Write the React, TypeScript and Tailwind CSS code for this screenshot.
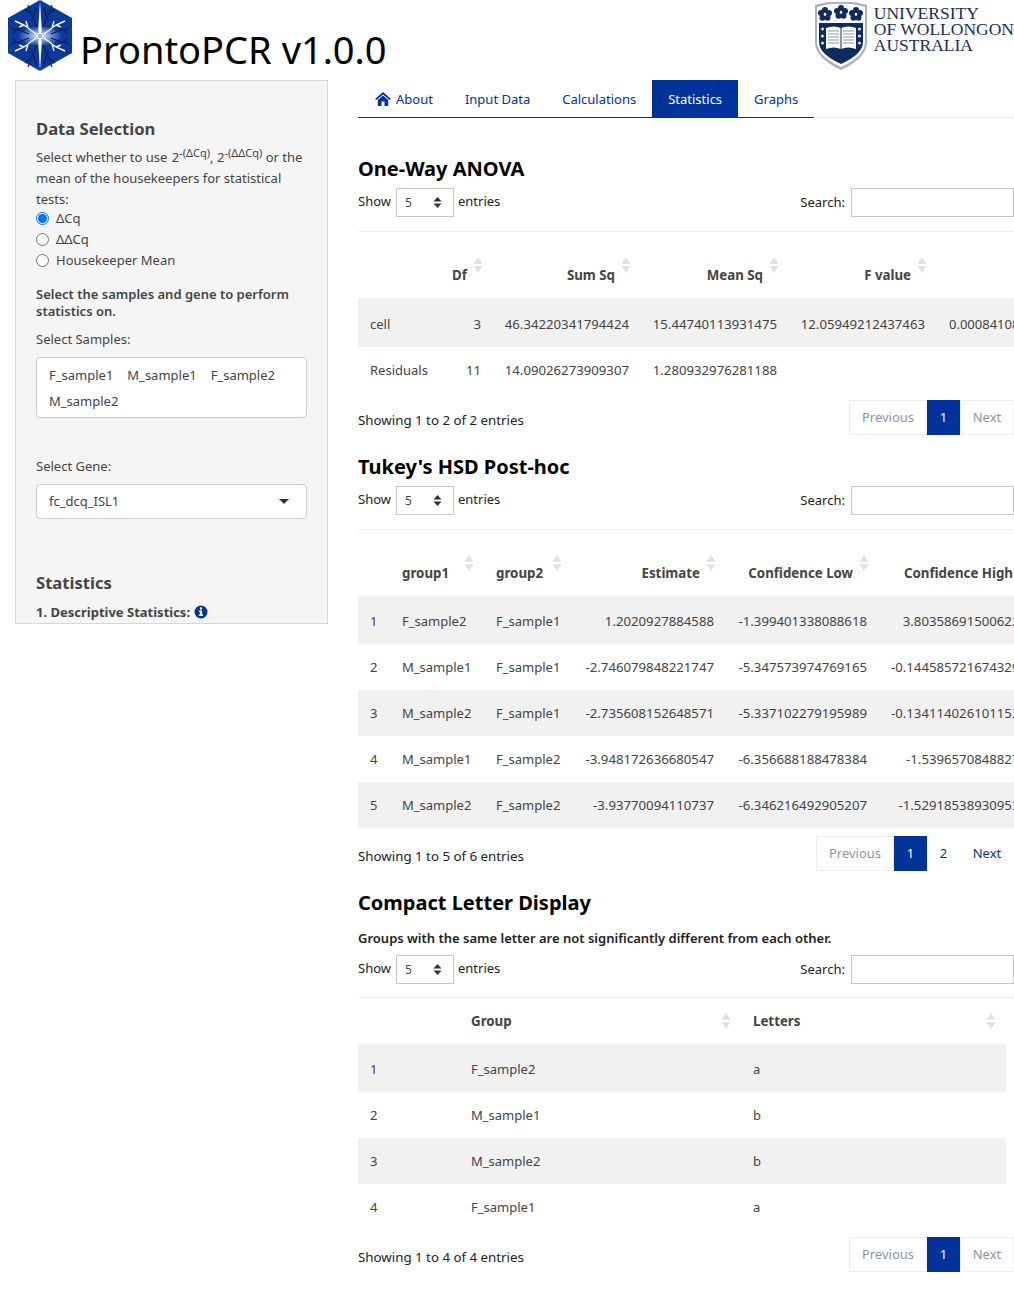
const Sort = () => (
  <svg width="10" height="16" viewBox="0 0 10 16" className="block">
    <path d="M5 0 L9.5 7 H0.5 Z" fill="#e2e2e2" />
    <path d="M5 16 L9.5 9 H0.5 Z" fill="#e2e2e2" />
  </svg>
);

const Logo = () => (
  <svg width="66" height="72" viewBox="0 0 66 72">
    <defs>
      <radialGradient id="glow" cx="50%" cy="50%" r="50%">
        <stop offset="0%" stopColor="#ffffff" />
        <stop offset="40%" stopColor="#8fa6de" />
        <stop offset="100%" stopColor="#0b3a9c" />
      </radialGradient>
    </defs>
    <path d="M33 0 L65 18 V53 L33 71 L1 53 V18 Z" fill="#0b3a9c" />
    <ellipse cx="33" cy="36" rx="22" ry="10" fill="url(#glow)" />
    <g stroke="#0a1f5c" strokeWidth="1.2" fill="none">
      <path d="M21 5 L24 14 L30 27 M24 14 L18 9 M26 18 L29 8 M45 5 L42 14 L36 27 M42 14 L48 9 M40 18 L37 8" />
      <path d="M4 28 L12 30 L22 34 M9 29 L6 33 M15 31 L11 25 M62 28 L54 30 L44 34 M57 29 L60 33 M51 31 L55 25" />
      <path d="M21 67 L24 58 L30 45 M24 58 L18 63 M26 54 L29 64 M45 67 L42 58 L36 45 M42 58 L48 63 M40 54 L37 64" />
      <path d="M4 44 L12 42 L22 38 M9 43 L6 39 M15 41 L11 47 M62 44 L54 42 L44 38 M57 43 L60 39 M51 41 L55 47" />
    </g>
    <g fill="#ffffff">
      <path d="M33 1 L34.8 30 L33 36 L31.2 30 Z" />
      <path d="M33 71 L34.8 42 L33 36 L31.2 42 Z" />
    </g>
    <g stroke="#ffffff" fill="none" strokeWidth="1.4">
      <path d="M8 21 L17 25 L29 34 M17 25 L12 27 M21 28 L19 21 M58 21 L49 25 L37 34 M49 25 L54 27 M45 28 L47 21" />
      <path d="M8 51 L17 47 L29 38 M17 47 L12 45 M21 44 L19 51 M58 51 L49 47 L37 38 M49 47 L54 45 M45 44 L47 51" />
    </g>
    <circle cx="33" cy="36" r="3" fill="#a9b9e6" stroke="#ffffff" />
  </svg>
);

const Flower = ({ x, y }: { x: number; y: number }) => (
  <g fill="#0f2a5c" transform={`translate(${x} ${y}) scale(1.25)`}>
    <circle cx="0" cy="-3.2" r="2.4" />
    <circle cx="3.2" cy="-0.8" r="2.4" />
    <circle cx="2" cy="3" r="2.4" />
    <circle cx="-2" cy="3" r="2.4" />
    <circle cx="-3.2" cy="-0.8" r="2.4" />
    <circle cx="0" cy="0.4" r="0.9" fill="#ffffff" />
  </g>
);

const Crest = () => (
  <svg width="54" height="70" viewBox="0 0 54 70">
    <path d="M1 5 Q14 1 27 2 Q40 1 53 5 V42 Q53 58 27 70 Q1 58 1 42 Z" fill="#aab2c1" />
    <path d="M3 7 Q15 3 27 4 Q39 3 51 7 V42 Q51 56 27 67 Q3 56 3 42 Z" fill="#ffffff" />
    <path d="M5 23 H49 V42 Q49 54 27 64 Q5 54 5 42 Z" fill="#0f2a5c" />
    <Flower x={11} y={14} />
    <Flower x={27} y={12} />
    <Flower x={42} y={14} />
    <path d="M12 28 Q20 25 27 28 Q34 25 42 28 V49 Q34 46 27 49 Q20 46 12 49 Z" fill="#ffffff" />
    <path d="M27 28 V49" stroke="#0f2a5c" />
    <g stroke="#8a96ad" strokeWidth="1">
      <path d="M14 31 H25 M14 34 H25 M14 37 H25 M14 40 H25 M14 43 H25 M29 31 H40 M29 34 H40 M29 37 H40 M29 40 H40 M29 43 H40" />
    </g>
    <g fill="#d5dae4">
      <circle cx="8.5" cy="29" r="1.6" />
      <circle cx="8.5" cy="36" r="1.6" />
      <circle cx="8.5" cy="43" r="1.6" />
      <circle cx="45.5" cy="29" r="1.6" />
      <circle cx="45.5" cy="36" r="1.6" />
      <circle cx="45.5" cy="43" r="1.6" />
    </g>
  </svg>
);

const Radio = ({ on, label }: { on?: boolean; label: string }) => (
  <div className="flex items-center h-[21px]">
    <span
      className={
        on
          ? "w-[13px] h-[13px] rounded-full border border-[#0075ff] bg-white flex items-center justify-center"
          : "w-[13px] h-[13px] rounded-full border border-[#767676] bg-white"
      }
    >
      {on && <span className="w-[9px] h-[9px] rounded-full bg-[#0075ff]" />}
    </span>
    <span className="ml-[7px]">{label}</span>
  </div>
);

const Sidebar = () => (
  <aside className="ml-[15px] w-[313px] h-[544px] shrink-0 overflow-hidden bg-[#f5f5f5] border border-[#d8d8d8] pt-[36px] px-[20px] text-[13px] text-[#444]">
    <h3 className="text-[16.6px] font-bold leading-[24px] text-[#444]">Data Selection</h3>
    <p className="mt-[6px] leading-[21px]">
      Select whether to use <span className="ml-[1px]">2</span>
      <sup className="text-[11px]">-(ΔCq)</sup>, 2<sup className="text-[11px]">-(ΔΔCq)</sup> or the mean of the
      housekeepers for statistical tests:
    </p>
    <div className="-mt-[2px]">
      <Radio on label="ΔCq" />
      <Radio label="ΔΔCq" />
      <Radio label="Housekeeper Mean" />
    </div>
    <p className="mt-[15px] font-semibold leading-[17px]">Select the samples and gene to perform statistics on.</p>
    <p className="mt-[9px] leading-[21px]">Select Samples:</p>
    <div className="mt-[7px] h-[61px] bg-white border border-[#cccccc] rounded-[4px] px-[12px] pt-[4px] leading-[26px]">
      <div className="flex gap-[14px]">
        <span>F_sample1</span>
        <span>M_sample1</span>
        <span>F_sample2</span>
      </div>
      <div>M_sample2</div>
    </div>
    <p className="mt-[38px] leading-[21px]">Select Gene:</p>
    <div className="mt-[7px] h-[35px] bg-white border border-[#cccccc] rounded-[4px] px-[12px] flex items-center justify-between">
      <span className="pt-[1px]">fc_dcq_ISL1</span>
      <span className="w-0 h-0 border-x-[5px] border-x-transparent border-t-[5px] border-t-[#333] mr-[5px]" />
    </div>
    <h3 className="mt-[52px] text-[16.6px] font-bold leading-[24px]">Statistics</h3>
    <p className="mt-[7px] font-bold flex items-center gap-[4px] leading-[20px]">
      1. Descriptive Statistics:
      <svg width="14" height="14" viewBox="0 0 14 14">
        <circle cx="7" cy="7" r="6.5" fill="#00339a" />
        <rect x="5.9" y="2.4" width="2.2" height="2.2" fill="#fff" />
        <path d="M4.9 5.6 H8.1 V9.6 H9.1 V11 H4.9 V9.6 H5.9 V7 H4.9 Z" fill="#fff" />
      </svg>
    </p>
  </aside>
);

const Tabs = () => (
  <nav className="flex h-[38px] border-b border-[#eeeeee] text-[13px] text-[#00339a] whitespace-nowrap">
    <div className="flex border-b border-[#00339a] h-[38px] w-[456px]">
      <a className="h-[37px] pl-[17px] pr-[16px] pt-[2px] flex items-center gap-[5px]">
        <svg width="16" height="14" viewBox="0 0 16 14" className="-mt-[2px]">
          <path d="M8 0 L16 7 L14.6 8 L8 2.4 L1.4 8 L0 7 Z M2.8 8 L8 3.6 L13.2 8 V14 H9.5 V9.6 H6.5 V14 H2.8 Z" fill="#00339a" />
        </svg>
        About
      </a>
      <a className="h-[37px] px-[16px] pt-[2px] flex items-center">Input Data</a>
      <a className="h-[37px] px-[16px] pt-[2px] flex items-center">Calculations</a>
      <a className="h-[37px] px-[16px] pt-[2px] flex items-center bg-[#00339a] text-white">Statistics</a>
      <a className="h-[37px] px-[16px] pt-[2px] flex items-center">Graphs</a>
    </div>
  </nav>
);

const Controls = () => (
  <div className="flex items-center justify-between h-[29px] text-[13px] text-[#222]">
    <div className="flex items-center">
      <span className="-mt-[2px]">Show</span>
      <span className="ml-[5px] w-[58px] h-[29px] border border-[#c8c8c8] pl-[8px] flex items-center justify-between pr-[11px] text-[12px] text-[#444]">
        5
        <svg width="9" height="11" viewBox="0 0 9 11">
          <path d="M4.5 0 L8.5 4.4 H0.5 Z M4.5 11 L8.5 6.6 H0.5 Z" fill="#333" />
        </svg>
      </span>
      <span className="ml-[4px] -mt-[2px]">entries</span>
    </div>
    <div className="flex items-center">
      <span>Search:</span>
      <span className="ml-[6px] w-[163px] h-[29px] border border-[#c8c8c8] bg-white" />
    </div>
  </div>
);

const Pager = ({ info, two }: { info: string; two?: boolean }) => (
  <div className="flex items-center justify-between h-[35px] text-[13px] text-[#222]">
    <span className="pt-[6px] text-[13.3px]">{info}</span>
    <div className="flex h-[35px]">
      <span className="h-[35px] w-[78px] pt-[1px] border border-[#eeeeee] flex items-center justify-center text-[#8c96a3]">Previous</span>
      <span className="h-[35px] w-[33px] pt-[1px] bg-[#00339a] text-white flex items-center justify-center">1</span>
      {two && <span className="h-[35px] w-[33px] pt-[1px] text-[#00339a] flex items-center justify-center">2</span>}
      <span
        className={
          two
            ? "h-[35px] w-[54px] pt-[1px] text-[#00339a] flex items-center justify-center"
            : "h-[35px] w-[54px] pt-[1px] border border-[#eeeeee] flex items-center justify-center text-[#8c96a3]"
        }
      >
        Next
      </span>
    </div>
  </div>
);

type Col = { title: string; width: number; align: "left" | "right" };

type TableProps = {
  cols: Col[];
  rows: string[][];
  headH: number;
  rowH: number[];
  sortTop: number;
  center?: boolean;
  width?: number;
};

const DataTable = ({ cols, rows, headH, rowH, sortTop, center, width }: TableProps) => (
  <div className="overflow-hidden" style={{ width: width ?? 656 }}>
    <div className="grid" style={{ gridTemplateColumns: cols.map((c) => `${c.width}px`).join(" "), width: "max-content" }}>
      {cols.map((c, i) => (
        <div
          key={i}
          className={
            (center ? "items-center pt-[2px] " : "items-end pb-[12px] ") +
            (c.align === "right"
              ? "relative flex justify-end font-bold text-[13.3px] text-[#444] pr-[26px] whitespace-nowrap"
              : "relative flex font-bold text-[13.3px] text-[#444] pl-[12px] whitespace-nowrap")
          }
          style={{ height: headH }}
        >
          {c.title}
          {c.title !== "" && (
            <span className="absolute right-[10px]" style={{ top: sortTop }}>
              <Sort />
            </span>
          )}
        </div>
      ))}
      {rows.map((r, ri) =>
        r.map((v, ci) => (
          <div
            key={`${ri}-${ci}`}
            className={
              (ri % 2 === 0 ? "bg-[#f1f1f1] " : "") +
              (ri === 0 ? "pt-[4px] " : "pt-[2px] ") +
              (cols[ci].align === "right"
                ? "flex items-center justify-end px-[12px] whitespace-nowrap text-[13.2px] text-[#444]"
                : "flex items-center px-[12px] whitespace-nowrap text-[13px] text-[#444]")
            }
            style={{ height: rowH[ri] }}
          >
            {v}
          </div>
        )),
      )}
    </div>
  </div>
);

const anova: Col[] = [
  { title: "", width: 86, align: "left" },
  { title: "Df", width: 49, align: "right" },
  { title: "Sum Sq", width: 148, align: "right" },
  { title: "Mean Sq", width: 148, align: "right" },
  { title: "F value", width: 148, align: "right" },
  { title: "", width: 120, align: "left" },
];

const tukey: Col[] = [
  { title: "", width: 32, align: "left" },
  { title: "group1", width: 94, align: "left" },
  { title: "group2", width: 88, align: "left" },
  { title: "Estimate", width: 154, align: "right" },
  { title: "Confidence Low", width: 153, align: "right" },
  { title: "Confidence High", width: 160, align: "right" },
];

const cld: Col[] = [
  { title: "", width: 101, align: "left" },
  { title: "Group", width: 282, align: "left" },
  { title: "Letters", width: 265, align: "left" },
];

const H2 = ({ children, className }: { children: string; className: string }) => (
  <h2 className={`${className} text-[20px] font-bold leading-[30px] text-black`}>{children}</h2>
);

export default function App() {
  return (
    <div className="w-[1014px] h-[1316px] overflow-hidden bg-white font-['Noto_Sans','Open_Sans',sans-serif]">
      <header className="h-[80px] flex items-start justify-between">
        <div className="flex items-start">
          <div className="ml-[7px]">
            <Logo />
          </div>
          <h1 className="ml-[7px] mt-[24px] text-[38px] leading-[50px] text-black">ProntoPCR v1.0.0</h1>
        </div>
        <div className="flex items-start">
          <Crest />
          <div className="ml-[6px] mt-[5px] font-['Liberation_Serif',serif] text-[17.5px] leading-[16px] text-[#1b2d5b] whitespace-nowrap">
            <div>UNIVERSITY</div>
            <div>OF WOLLONGON</div>
            <div>AUSTRALIA</div>
          </div>
        </div>
      </header>
      <div className="flex">
        <Sidebar />
        <main className="ml-[30px] w-[656px]">
          <Tabs />
          <H2 className="mt-[36px]">One-Way ANOVA</H2>
          <div className="mt-[4px]">
            <Controls />
          </div>
          <div className="mt-[14px] border-t border-[#eeeeee]">
            <DataTable
              cols={anova}
              headH={66}
              sortTop={25}
              rowH={[49, 46]}
              rows={[
                ["cell", "3", "46.34220341794424", "15.44740113931475", "12.05949212437463", "0.00084108"],
                ["Residuals", "11", "14.09026273909307", "1.280932976281188", "", ""],
              ]}
            />
          </div>
          <div className="mt-[7px]">
            <Pager info="Showing 1 to 2 of 2 entries" />
          </div>
          <H2 className="mt-[17px]">Tukey's HSD Post-hoc</H2>
          <div className="mt-[4px]">
            <Controls />
          </div>
          <div className="mt-[14px] border-t border-[#eeeeee]">
            <DataTable
              cols={tukey}
              headH={66}
              sortTop={25}
              rowH={[48, 46, 46, 46, 46]}
              rows={[
                ["1", "F_sample2", "F_sample1", "1.2020927884588", "-1.399401338088618", "3.803586915006229"],
                ["2", "M_sample1", "F_sample1", "-2.746079848221747", "-5.347573974769165", "-0.1445857216743295"],
                ["3", "M_sample2", "F_sample1", "-2.735608152648571", "-5.337102279195989", "-0.1341140261011530"],
                ["4", "M_sample1", "F_sample2", "-3.948172636680547", "-6.356688188478384", "-1.53965708488271"],
                ["5", "M_sample2", "F_sample2", "-3.93770094110737", "-6.346216492905207", "-1.529185389309535"],
              ]}
            />
          </div>
          <div className="mt-[8px]">
            <Pager info="Showing 1 to 5 of 6 entries" two />
          </div>
          <H2 className="mt-[17px]">Compact Letter Display</H2>
          <p className="mt-[11px] font-semibold text-[13px] leading-[18px] text-[#222]">
            Groups with the same letter are not significantly different from each other.
          </p>
          <div className="mt-[8px]">
            <Controls />
          </div>
          <div className="mt-[13px] border-t border-[#eeeeee]">
            <DataTable
              cols={cld}
              width={648}
              center
              sortTop={15}
              headH={46}
              rowH={[48, 46, 46, 46]}
              rows={[
                ["1", "F_sample2", "a"],
                ["2", "M_sample1", "b"],
                ["3", "M_sample2", "b"],
                ["4", "F_sample1", "a"],
              ]}
            />
          </div>
          <div className="mt-[7px]">
            <Pager info="Showing 1 to 4 of 4 entries" />
          </div>
        </main>
      </div>
    </div>
  );
}
